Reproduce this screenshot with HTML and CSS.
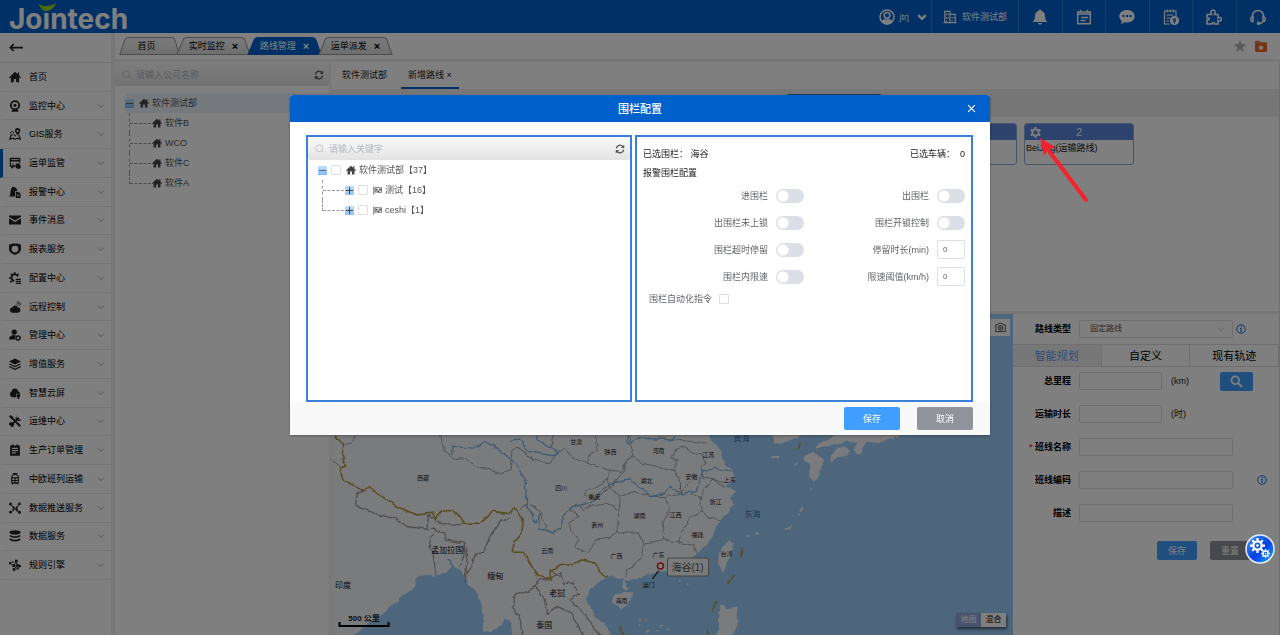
FILE: index.html
```html
<!DOCTYPE html>
<html lang="zh-CN">
<head>
<meta charset="utf-8">
<title>Jointech</title>
<link rel="stylesheet" href="styles.css">
</head>
<body>
<svg class="defs" aria-hidden="true">
  <defs>
    <linearGradient id="g-tab" x1="0" y1="0" x2="0" y2="1"><stop offset="0" stop-color="#f6f6f6"/><stop offset="1" stop-color="#dcdcdc"/></linearGradient>
    <linearGradient id="g-ball" x1="0" y1="0" x2="1" y2="1"><stop offset="0" stop-color="#4a9bf5"/><stop offset=".45" stop-color="#0b50e0"/><stop offset=".55" stop-color="#0a3fe8"/><stop offset="1" stop-color="#18b4ff"/></linearGradient>
    <symbol id="i-home" viewBox="0 0 16 16"><path d="M8 1 0 8.500l1 1L2.500 8.400V15h4v-4.500h3V15h4V8.400L15 9.500l1-1-2.500-2.400V2h-2v2.200z"/></symbol>
    <symbol id="i-tab" viewBox="0 0 74 18" preserveAspectRatio="none"><path d="M1 17.500 7 3Q8 .5 11 .5H64Q67 .5 68 3L73 17.500z" vector-effect="non-scaling-stroke"/></symbol>
    <symbol id="i-down" viewBox="0 0 16 16"><path d="m2 5 6 6 6-6" fill="none" stroke="currentColor" stroke-width="1.500"/></symbol>
    <symbol id="i-search" viewBox="0 0 16 16"><circle cx="7.500" cy="7.500" r="6" fill="none" stroke="currentColor" stroke-width="1.400"/><path d="m12 12 2.500 2.500" stroke="currentColor" stroke-width="1.400"/></symbol>
    <symbol id="i-refresh" viewBox="0 0 16 16"><path d="M2 7a6 6 0 0 1 10.500-3M14 9a6 6 0 0 1-10.500 3" fill="none" stroke="currentColor" stroke-width="2"/><path d="M14.800 1v5.500H9.300zM1.200 15V9.500h5.500z"/></symbol>
    <symbol id="i-info" viewBox="0 0 16 16"><circle cx="8" cy="8" r="6.800" fill="none" stroke="currentColor" stroke-width="1.600"/><circle cx="8.700" cy="4.500" r="1.200"/><path d="M6.500 7.200h2.200L7.700 12h1.500" fill="none" stroke="currentColor" stroke-width="1.600"/></symbol>
    <symbol id="i-flag" viewBox="0 0 16 16"><path d="M1.500 1v14" stroke="currentColor" stroke-width="1.500"/><path d="M4 3c4-2 6 2 11 0v8c-5 2-7-2-11 0z" fill="none" stroke="currentColor" stroke-width="1.300"/><path d="M5 5h3v3H5zM11 5h3v3h-3zM8 8h3v3H8z"/></symbol>
    <symbol id="i-gear" viewBox="0 0 16 16"><circle cx="8" cy="8" r="4.500" fill="none" stroke="currentColor" stroke-width="2.500"/><path d="M6.500 0h3v3h-3zM6.500 13h3v3h-3zM.3 5.300l1.500-2.600 2.600 1.500-1.500 2.600zM11.600 11.800l1.500-2.600 2.600 1.500-1.500 2.600zM.3 10.700l2.600-1.500 1.500 2.600-2.600 1.500zM11.600 4.200l2.600-1.500 1.500 2.600-2.600 1.500z"/></symbol>
    <symbol id="i-cog" viewBox="-10 -10 20 20"><circle r="5.500" fill="none" stroke="#fff" stroke-width="3"/><circle r="1.800" fill="#fff"/><path d="M0-10V-6M0 6v4M-10 0h4M6 0h4M-7-7l3 3M4 4l3 3M-7 7l3-3M4-4l3-3" stroke="#fff" stroke-width="3"/></symbol>
  </defs>
</svg>

<div class="app">
  <header class="topbar">
    <svg class="logo" viewBox="0 0 136 33" role="img" aria-label="Jointech">
      <text x="0" y="29" class="logo-text">Jointech</text>
      <path d="M30 4q8 5 17-1-3 8-10 8-5 0-7-7z" fill="#9bd400"/>
    </svg>
    <div class="top-right">
      <button class="user"><svg viewBox="0 0 16 16"><circle cx="8" cy="8" r="7" fill="none" stroke="currentColor" stroke-width="1.500"/><circle cx="8" cy="6.300" r="2.900" fill="none" stroke="currentColor" stroke-width="1.500"/><path d="M2.500 13C4 9.500 6 10.500 8 10.500s4-1 5.500 2.500Q11 15.500 8 15.500T2.500 13z"/></svg>jtrj<svg class="caret" viewBox="0 0 16 16"><path d="m2 5 6 6 6-6" fill="none" stroke="currentColor" stroke-width="3.500"/></svg></button>
      <button class="company"><svg viewBox="0 0 16 16" fill="none" stroke="currentColor" stroke-width="1.300"><path d="M2 14.500V1.500h6v13M8 5h6v9.500M.5 14.500h15M4 4v2M6 4v2M4 8v2M6 8v2M4 12v2M10.500 8v1.500M12.500 8v1.500M10.500 11v1.500"/></svg>软件测试部</button>
      <div class="tools">
        <button aria-label="通知"><svg viewBox="0 0 16 16"><path d="M8 .5c.9 0 1.300.6 1.300 1.300C12 2.500 13 4.500 13 7c0 3.500 1 4.500 2.500 6H.5C2 11.500 3 10.500 3 7c0-2.500 1-4.500 3.700-5.200C6.700 1.100 7.100.5 8 .5zM6 14h4q-.5 1.700-2 1.700T6 14z"/></svg></button>
        <button aria-label="日程"><svg viewBox="0 0 16 16" fill="none" stroke="currentColor" stroke-width="1.500"><path d="M1.700 3h12.600v11.700H1.700zM1.700 5h12.600M4.500.8v3M11.500.8v3M5 8.500h7M4.500 11.500h5"/></svg></button>
        <button aria-label="消息"><svg viewBox="0 0 16 16"><path fill-rule="evenodd" d="M8 1c4.500 0 7.700 2.700 7.700 6.200S12.500 13.400 8 13.400c-.8 0-1.500 0-2.200-.2L2 15.200l.8-3.200C1.200 10.900.3 9.200.3 7.200.3 3.700 3.500 1 8 1zM3.500 6v2h2V6zM7 6v2h2V6zm3.500 0v2h2V6z"/></svg></button>
        <button aria-label="账单"><svg viewBox="0 0 16 16" fill="none" stroke="currentColor" stroke-width="1.200"><path d="M7 15H1.500V2H13v5M4 .5v3M7.300.5v3M10.500.5v3M3.500 6h7M3.500 9H7M3.500 12H6"/><circle cx="11.500" cy="11.500" r="4" fill="currentColor"/><path d="m10 9.500 1.500 1.500L13 9.500M11.500 11v3.500M10 12h3" stroke="#0061cc"/></svg></button>
        <button aria-label="插件"><svg viewBox="0 0 16 16" fill="none" stroke="currentColor" stroke-width="1.500"><path d="M1 5.500h4.500C4 3 5.200 1 7 1s3 2 1.500 4.500H12V9c2-1.300 3.500-.3 3.500 1.200S14 12.500 12 11.500V15H8.500c.5-2-3-2-2.500 0H1v-4c3 .8 3-3 0-2.200z"/></svg></button>
        <button aria-label="客服"><svg viewBox="0 0 16 16" fill="none" stroke="currentColor" stroke-width="1.500"><path d="M2.500 8V7a5.500 5.500 0 0 1 11 0v1M3 8v4.500H2Q.8 12 .8 10.200T2 8zM13 8v4.500h1q1.200-.5 1.200-2.300T14 8zM12.500 13q-1 1.500-3 1.500"/><circle cx="8.500" cy="14.300" r="1" fill="currentColor"/></svg></button>
      </div>
    </div>
  </header>

  <div class="body">
    <nav class="sidebar">
      <button class="back" aria-label="收起"><svg viewBox="0 0 16 10"><path d="M1 5h15M5.500 1 1.500 5l4 4" fill="none" stroke="currentColor" stroke-width="2"/></svg></button>
      <ul class="menu">
        <li><a href="#"><svg><use href="#i-home"/></svg>首页</a></li>
        <li><a href="#"><svg viewBox="0 0 16 16"><circle cx="8" cy="7" r="5.500" fill="none" stroke="currentColor" stroke-width="2.500"/><circle cx="8" cy="7" r="2"/><path d="M3 15.500 5 12h6l2 3.500z"/></svg>监控中心<svg class="chev"><use href="#i-down"/></svg></a></li>
        <li><a href="#"><svg viewBox="0 0 16 16"><path d="M3 9 1 15l4-1.500 3 1.500 3-1.500 4 1.500-2-6M7 9l2 2" fill="none" stroke="currentColor" stroke-width="1.500"/><path fill-rule="evenodd" d="M11.500 0A3.800 3.800 0 0 1 15 4c0 2-2 3.500-3.500 6C10 7.500 8 6 8 4a3.800 3.800 0 0 1 3.500-4zm0 2.500a1.500 1.500 0 1 0 0 3 1.500 1.500 0 0 0 0-3z"/><path d="M4 4.500q2 0 2 2T4 10Q2 8 2 6.500t2-2z" fill="none" stroke="currentColor"/></svg>GIS服务<svg class="chev"><use href="#i-down"/></svg></a></li>
        <li class="active"><a href="#"><svg viewBox="0 0 16 16"><path fill-rule="evenodd" d="M2 1h12q1 0 1 1v6h-1.500V6h-11v5H9v2H6v2H3v-2H1V2q0-1 1-1zm1 2v1h10V3z"/><path d="M4 8.500h2v1.500H4zM9 8.500h5l1.500 3V15H14a1 1 0 0 1-2.500 0H9z"/></svg>运单监管<svg class="chev"><use href="#i-down"/></svg></a></li>
        <li><a href="#"><svg viewBox="0 0 16 16"><path d="M6 1q5 1 5 6H8v7H0q2-2 2-6 0-6 4-7zM9 8h4l2.500 2.500V16H9z"/><path d="M10.500 11h2M10.500 13h4" stroke="#fff"/></svg>报警中心<svg class="chev"><use href="#i-down"/></svg></a></li>
        <li><a href="#"><svg viewBox="0 0 16 16"><path d="M0 3.500V2h16v1.500L8 8.500zM0 5.500l8 5 8-5V14H0z"/></svg>事件消息<svg class="chev"><use href="#i-down"/></svg></a></li>
        <li><a href="#"><svg viewBox="0 0 16 16"><path fill-rule="evenodd" d="M0 2q3 0 4-1.500h8Q13 2 16 2v6q0 5-8 8-8-3-8-8zm8 1.500a4.500 4.500 0 1 0 0 9 4.500 4.500 0 0 0 0-9z"/></svg>报表服务<svg class="chev"><use href="#i-down"/></svg></a></li>
        <li><a href="#"><svg viewBox="0 0 16 16"><path d="M12 6A4.500 4.500 0 1 0 7 12" fill="none" stroke="currentColor" stroke-width="2.500"/><path d="M6.500 0h2v3h-2zM0 7h3v2H0zM1.500 3 3 1.500 5 4 4 5zM12 1.500 13.500 3 11.500 5 10 4zM2 14.500 1 13l2.500-2L5 12.500zM9 9h7v1.500H9zM9 11.700h7v1.500H9zM9 14.400h7V16H9z"/></svg>配置中心<svg class="chev"><use href="#i-down"/></svg></a></li>
        <li><a href="#"><svg viewBox="0 0 16 16"><path d="M5 15.500a3.500 3.500 0 0 1-.5-7A4 4 0 0 1 12 8.500a3.500 3.500 0 0 1-.5 7z"/><path d="M11 6 9.500 4.500M10 2.500a4 4 0 0 1 4 4M11 .7A5 5 0 0 1 15.500 5" fill="none" stroke="currentColor"/></svg>远程控制<svg class="chev"><use href="#i-down"/></svg></a></li>
        <li><a href="#"><svg viewBox="0 0 16 16"><circle cx="7" cy="4" r="3.500"/><path d="M0 14q0-6 7-6l2 .5Q7 11 8 14z"/><circle cx="12" cy="12" r="2.700" fill="none" stroke="currentColor" stroke-width="2"/></svg>管理中心<svg class="chev"><use href="#i-down"/></svg></a></li>
        <li><a href="#"><svg viewBox="0 0 16 16"><path d="m8 .5 8 4-8 4-8-4z"/><path d="m.5 8 7.500 3.500L15.500 8M.5 11.500 8 15l7.500-3.500" fill="none" stroke="currentColor" stroke-width="1.600"/></svg>增值服务<svg class="chev"><use href="#i-down"/></svg></a></li>
        <li><a href="#"><svg viewBox="0 0 16 16"><path d="M4 13.500a4 4 0 0 1-.5-7.500 4.500 4.500 0 0 1 8.800-.5A3.500 3.500 0 0 1 15 9H9.500v4.500z"/><circle cx="12.500" cy="11.500" r="2.500"/><path d="M11.500 13h2v3h-2z"/></svg>智慧云屏<svg class="chev"><use href="#i-down"/></svg></a></li>
        <li><a href="#"><svg viewBox="0 0 16 16"><path d="m3 13.500 10-10M3.500 3.500l9 9" stroke="currentColor" stroke-width="2.500"/><path d="M0 2 2 0l4 3-2.500 2.500zM10 0v4l2 2h4l-1 2h-3L8.500 4.500zM0 11l3-2 4 3.500-1.500 3L3 16l-1-2-2-1zM10 12l2-2 4 4-2 2z"/></svg>运维中心<svg class="chev"><use href="#i-down"/></svg></a></li>
        <li><a href="#"><svg viewBox="0 0 16 16"><path fill-rule="evenodd" d="M1.500 2H4V.5h2V2h4V.5h2V2h2.500v13.500h-13zM4 5v1.500h8V5zm0 3v1.500h8V8zm0 3v1.500h5V11z"/></svg>生产订单管理<svg class="chev"><use href="#i-down"/></svg></a></li>
        <li><a href="#"><svg viewBox="0 0 16 16" fill="none" stroke="currentColor" stroke-width="1.400"><path d="M3.500 6q0-4 4.500-4t4.500 4v7h-9zM3.500 6.500h9M8 6v7M3.500 10h9M5 .7h6M4 15.500l1-2h6l1 2"/></svg>中欧班列运输<svg class="chev"><use href="#i-down"/></svg></a></li>
        <li><a href="#"><svg viewBox="0 0 16 16"><path d="m2 3 4 4-1 5-3 2M14 2l-3 4-1 5 4 3M6 7l4 4 1-5-6 6" fill="none" stroke="currentColor" stroke-width="1.300"/><circle cx="2" cy="2.500" r="2"/><circle cx="14" cy="2.500" r="1.800"/><circle cx="2" cy="13.500" r="1.800"/><circle cx="14" cy="13.500" r="2"/><circle cx="6" cy="7" r="1.500"/><circle cx="10.500" cy="11" r="1.500"/></svg>数据推送服务<svg class="chev"><use href="#i-down"/></svg></a></li>
        <li><a href="#"><svg viewBox="0 0 16 16"><ellipse cx="8" cy="3.200" rx="7.500" ry="3"/><path d="M1 7.500q7 4 14 0M1 12q7 4.500 14 0" fill="none" stroke="currentColor" stroke-width="2.300"/></svg>数据服务<svg class="chev"><use href="#i-down"/></svg></a></li>
        <li><a href="#"><svg viewBox="0 0 16 16"><path d="M2 6l4 3 3-5 3 4-5 5M6 9h8" fill="none" stroke="currentColor" stroke-width="1.300"/><path d="M0 4h3v3H0zM8 1h3.500v3.500H8zM4.500 7H8v3.500H4.500zM10 6.500h3V10h-3zM13 8h3v3h-3zM5 12h3.500v3.500H5zM10 11h3v3h-3zM4 3h2v2H4z"/></svg>规则引擎<svg class="chev"><use href="#i-down"/></svg></a></li>
      </ul>
    </nav>

    <main class="main">
      <div class="page-tabs">
        <button class="ptab home-tab"><svg class="shape"><use href="#i-tab"/></svg><span>首页</span></button>
        <button class="ptab"><svg class="shape"><use href="#i-tab"/></svg><span>实时监控</span><b>×</b></button>
        <button class="ptab on"><svg class="shape"><use href="#i-tab"/></svg><span>路线管理</span><b>×</b></button>
        <button class="ptab"><svg class="shape"><use href="#i-tab"/></svg><span>运单派发</span><b>×</b></button>
        <div class="fav">
          <svg viewBox="0 0 16 16" fill="#b4b4b4"><path d="m8 0 2.400 5.400 5.600.6-4.200 3.900L13 16l-5-3.200L3 16l1.200-6.100L0 6l5.600-.6z"/></svg>
          <svg viewBox="0 0 16 16"><path d="M1 1h5l2 2h8v3H0V2z" fill="#d98a50"/><rect y="4" width="16" height="12" rx="2" fill="#f2622c"/><path d="m8 6 1.200 2.600 2.800.3-2 1.900.6 2.800L8 12.200l-2.600 1.400.6-2.800-2-1.900 2.800-.3z" fill="#fff"/></svg>
        </div>
      </div>

      <div class="work">
        <section class="org">
          <div class="searchbar"><svg class="mag"><use href="#i-search"/></svg><input aria-label="公司名称" placeholder="请输入公司名称"><button aria-label="刷新"><svg><use href="#i-refresh"/></svg></button></div>
          <div class="org-tree">
            <div class="node root"><i class="exp minus"></i><svg><use href="#i-home"/></svg>软件测试部</div>
            <ul class="kids">
              <li class="node"><i class="lead"></i><svg><use href="#i-home"/></svg>软件B</li>
              <li class="node"><i class="lead"></i><svg><use href="#i-home"/></svg>WCO</li>
              <li class="node"><i class="lead"></i><svg><use href="#i-home"/></svg>软件C</li>
              <li class="node"><i class="lead"></i><svg><use href="#i-home"/></svg>软件A</li>
            </ul>
          </div>
        </section>

        <section class="route">
          <div class="subtabs"><button>软件测试部</button><button class="on">新增路线 <span>×</span></button></div>
          <div class="lane-tools"><div class="lane-box"></div></div>
          <div class="cards">
            <article class="card"><h3></h3><p></p></article>
            <article class="card"><h3><svg><use href="#i-gear"/></svg>2</h3><p>BeiJing(运输路线)</p></article>
          </div>
          <div class="lower">
            <div class="map">
              <svg class="map-art" viewBox="331 314 681 321" preserveAspectRatio="xMinYMax slice">
                <defs><filter id="rough" x="0" y="0" width="1" height="1" color-interpolation-filters="sRGB"><feTurbulence type="fractalNoise" baseFrequency=".12" numOctaves="2" seed="4"/><feDisplacementMap in="SourceGraphic" scale="5" xChannelSelector="R" yChannelSelector="G"/></filter></defs>
                <rect x="331" y="314" width="681" height="321" fill="#9acdf8"/>
                <g filter="url(#rough)"><g transform="translate(320 400) scale(.333333)">
                  <g fill="#f5f6fa">
                    <path d="M20 60H1130L1165 105 1170 125 1195 140 1205 165 1210 195 1235 210 1245 240 1215 265 1250 275 1230 290 1238 310 1225 335 1200 360 1185 385 1175 415 1155 440 1125 465 1070 500 1030 515 980 525 940 540 912 545 928 568 915 572 905 560 908 540 880 530 862 530 830 550 805 575 800 600 820 640 860 680 880 730H580L570 660 555 652 545 675 510 697 488 690 490 640 480 600 470 575 445 555 425 510 400 500 380 515 345 530 320 522 290 535 285 560 240 595 200 630 150 665 105 705 90 730H20z"/>
                    <path d="M880 590 905 575 940 578 930 605 905 627 880 610z"/>
                    <path d="M1225 425 1240 430 1235 455 1215 500 1207 520 1192 490 1195 460 1210 435z"/>
                    <path d="M1200 615 1220 625 1248 620 1245 650 1253 665 1230 720H1175L1195 690V655z"/>
                    <path d="M1355 60V105L1362 135 1390 130 1410 120 1435 118 1440 60zM1355 170l18-5 2 7-18 4zM1450 180 1460 160 1480 153 1490 165 1510 180 1500 200 1490 240 1475 245 1465 225 1470 195zM1485 150 1495 135 1550 100H1745L1725 110 1705 118 1670 130 1640 125 1615 165 1598 150 1610 130 1580 125 1520 140zM1530 165 1550 145 1570 138 1585 150 1575 170 1550 172 1535 188z"/>
                    <path d="M1422 193l8-7M1470 264l6 4M1435 333l12-8M1396 392l15-14M1430 347l4-5M1278 408h6M1308 402h6M1075 545h5M1096 553h5M953 658h6M975 664h6M955 676h6M980 692h6M1018 680h6M1040 686h6M1008 693h6M975 663h5" fill="none" stroke="#f5f6fa" stroke-width="5"/>
                  </g>
                  <g fill="none" stroke="#aaaaae" stroke-width="3" stroke-linejoin="round">
                    <path d="M75 134 95 130 110 105M360 100 370 150 400 175 440 180 470 200 510 210 540 222 570 210 575 150 590 142 610 155 640 180 690 190 700 165 730 145 760 180 800 190 860 210 900 215 920 180 905 220 880 250 850 280 825 300 790 290 795 270 820 265 860 240 870 210M690 140 700 105M800 190 810 165 830 155 825 105M920 180 940 170 930 130 925 105M940 170 960 190 1010 200 1060 215 1080 240 1080 280 1110 245M1080 280 1030 290 990 290 940 275 900 290 870 265 860 240M900 290 895 340 890 395 930 400 955 395 970 430 960 480 925 510 910 535M770 310 790 330 820 315 860 310 890 330M770 310 750 330 775 350 745 370 755 400 775 420 765 440 800 460 830 420 870 415 890 395M1030 290 1050 330 1025 370 1030 420 970 430M1030 420 1080 430 1115 440 1130 460M1075 435 1080 400 1110 350 1145 335 1140 300 1150 270 1180 240 1210 265M1145 335 1165 355 1200 360M1110 280 1145 300M1080 240 1060 215 1070 180 1055 175 1065 150 1090 140 1115 160 1140 165 1160 190 1140 205 1150 235 1210 245M1010 110 1060 120 1160 130M630 310 660 340 680 380 665 395M600 335 615 310 640 350"/>
                    <path d="M130 270 110 280 103 315 170 345 220 355 260 380 320 388 325 345 340 355M345 370 430 375M320 388 340 385 370 400 375 420 435 430 430 470 420 500M340 400 325 410 330 440 340 470 348 528M435 430 440 480 435 550M440 520 455 500 465 460 490 460 515 400 540 365 570 355M645 560 620 575 585 585 575 620 600 660 605 705M645 560 660 540 690 540 720 515 730 550 760 550 775 580 750 600 790 640 840 705M645 560 670 590 680 645 710 620 750 640 790 705M690 510 720 530M33 180 60 200" stroke="#a49d98" stroke-width="4"/>
                  </g>
                  <path d="M45 105 72 140 65 165 80 200 58 205 70 240 130 272 150 265 200 300 240 325 290 345 340 340 345 362 365 332 410 340 430 370 475 370 520 335 570 342 580 322 608 355 605 400 580 430 580 460 610 460 650 525 690 540 690 510 720 495 760 490 785 480 825 490 835 515 862 530" fill="none" stroke="#b49a48" stroke-width="5"/>
                  <g fill="none" stroke="#82b9e6" stroke-width="4">
                    <path d="M398 165V140L460 145 495 125 550 160 600 205 615 250 620 320 645 370 657 345 655 390 700 398 725 385 725 350 760 320 810 310 870 250 930 240 990 290 1030 280 1050 260 1085 285 1130 270 1145 220 1180 205 1240 215M570 122 600 118 620 155 700 168 710 155 650 120V105M920 105V130L960 115 1050 120 1060 108M380 475 400 505"/>
                  </g>
                  <path d="M1265 440l-4 32M1241 525l-22 28M1189 603l-18 30M1162 687v18M895 682l16 24M1438 128l-4 18" fill="none" stroke="#b49a48" stroke-width="5"/>
                </g></g>
                <g class="lbl">
                  <text x="576" y="444">甘肃</text><text x="610" y="454">陕西</text><text x="658" y="453">河南</text><text x="708" y="457">江苏</text><text x="423" y="480">西藏</text><text x="561" y="490">四川</text><text x="594" y="499">重庆</text><text x="646" y="483">湖北</text><text x="691" y="479">安徽</text><text x="729" y="482">上海</text><text x="639" y="518">湖南</text><text x="675" y="517">江西</text><text x="715" y="504">浙江</text><text x="597" y="527">贵州</text><text x="697" y="537">福建</text><text x="547" y="553">云南</text><text x="616" y="558">广西</text><text x="658" y="557">广东</text><text x="726" y="556">台湾</text><text x="621" y="603">海南</text><text x="648" y="587">澳门</text>
                </g>
                <g class="lbl sea"><text x="741" y="441">黄海</text><text x="752" y="517">东海</text></g>
                <g class="lbl nation"><text x="447" y="553">孟加拉国</text><text x="495" y="579">缅甸</text><text x="343" y="588">印度</text><text x="557" y="596">老挝</text><text x="544" y="628">泰国</text></g>
                <path d="m652 579 6-8" stroke="#333" stroke-width="1.500"/>
                <circle cx="660" cy="566" r="3" fill="#fff" stroke="#e02020" stroke-width="1.500"/>
                <rect x="667" y="558" width="41" height="18" rx="2" fill="#f5f5f5" stroke="#888"/>
                <text class="pin" x="687" y="571">海谷(1)</text>
                <path d="M339.500 622v4h49v-4" fill="none" stroke="#000" stroke-width="2"/>
                <text class="scale" x="364" y="621">500 公里</text>
              </svg>
              <button class="shot" aria-label="截图"><svg viewBox="0 0 16 16" fill="none" stroke="currentColor" stroke-width="1.300"><path d="M1 4h3l1.500-2h5L12 4h3v10H1z"/><circle cx="8" cy="8.500" r="3.500"/><circle cx="8" cy="8.500" r="1.300"/></svg></button>
              <div class="maptype"><button class="on">地图</button><button>混合</button></div>
            </div>

            <form class="plan">
              <div class="row type-row"><label for="rt">路线类型</label><span class="sel"><select id="rt"><option>固定路线</option></select><svg><use href="#i-down"/></svg></span><svg class="info"><use href="#i-info"/></svg></div>
              <div class="modes"><button type="button" class="on">智能规划</button><button type="button">自定义</button><button type="button">现有轨迹</button></div>
              <div class="fields">
                <div class="row"><label for="f1">总里程</label><input id="f1" class="short"><span class="unit">(km)</span><button type="button" class="find" aria-label="搜索"><svg viewBox="0 0 16 16" fill="none" stroke="currentColor" stroke-width="2.200"><circle cx="6.500" cy="6.500" r="4.700"/><path d="m10 10 5 5"/></svg></button></div>
                <div class="row"><label for="f2">运输时长</label><input id="f2" class="short"><span class="unit">(时)</span></div>
                <div class="row"><label for="f3"><em>*</em> 班线名称</label><input id="f3"></div>
                <div class="row"><label for="f4">班线编码</label><input id="f4"><svg class="info far"><use href="#i-info"/></svg></div>
                <div class="row"><label for="f5">描述</label><input id="f5"></div>
              </div>
              <div class="plan-actions"><button type="button" class="primary">保存</button><button type="button" class="plain">重置</button></div>
            </form>
          </div>
        </section>
      </div>
    </main>
  </div>
</div>

<div class="mask">
  <div class="dialog" role="dialog" aria-labelledby="dt">
    <div class="dialog-head"><h2 id="dt">围栏配置</h2><button aria-label="关闭"><svg viewBox="0 0 16 16"><path d="m2 2 12 12M14 2 2 14" stroke="currentColor" stroke-width="2"/></svg></button></div>
    <div class="dialog-body">
      <section class="pane fences">
        <div class="searchbar"><svg class="mag"><use href="#i-search"/></svg><input aria-label="关键字" placeholder="请输入关键字"><button aria-label="刷新"><svg><use href="#i-refresh"/></svg></button></div>
        <div class="fence-tree">
          <div class="node"><i class="exp minus"></i><input type="checkbox" id="n0"><label for="n0"><svg><use href="#i-home"/></svg>软件测试部【37】</label></div>
          <ul class="kids">
            <li class="node"><i class="lead"></i><i class="exp plus"></i><input type="checkbox" id="n1"><label for="n1"><svg><use href="#i-flag"/></svg>测试【16】</label></li>
            <li class="node"><i class="lead"></i><i class="exp plus"></i><input type="checkbox" id="n2"><label for="n2"><svg><use href="#i-flag"/></svg>ceshi【1】</label></li>
          </ul>
        </div>
      </section>
      <section class="pane config">
        <div class="chosen"><span>已选围栏： 海谷</span><span>已选车辆：&nbsp; 0</span></div>
        <h3>报警围栏配置</h3>
        <div class="opts">
          <div class="opt"><label for="s1">进围栏</label><input type="checkbox" role="switch" class="switch" id="s1"></div>
          <div class="opt"><label for="s2">出围栏</label><input type="checkbox" role="switch" class="switch" id="s2"></div>
          <div class="opt"><label for="s3">出围栏未上锁</label><input type="checkbox" role="switch" class="switch" id="s3"></div>
          <div class="opt"><label for="s4">围栏开锁控制</label><input type="checkbox" role="switch" class="switch" id="s4"></div>
          <div class="opt"><label for="s5">围栏超时停留</label><input type="checkbox" role="switch" class="switch" id="s5"></div>
          <div class="opt"><label for="s6">停留时长(min)</label><input class="num" id="s6" value="0"></div>
          <div class="opt"><label for="s7">围栏内限速</label><input type="checkbox" role="switch" class="switch" id="s7"></div>
          <div class="opt"><label for="s8">限速阈值(km/h)</label><input class="num" id="s8" value="0"></div>
        </div>
        <div class="auto"><label for="au">围栏自动化指令</label><input type="checkbox" id="au"></div>
      </section>
    </div>
    <div class="dialog-foot"><button class="primary">保存</button><button class="plain">取消</button></div>
  </div>
</div>

<svg class="pointer" viewBox="0 0 50 65" aria-hidden="true"><path d="M47 62 10 13" stroke="#f5222d" stroke-width="4" stroke-linecap="round"/><path d="m1 0 15 9-7 3-4 6z" fill="#f5222d"/></svg>
<button class="float" aria-label="设置"><svg viewBox="0 0 30 30"><circle cx="15" cy="15" r="14" fill="url(#g-ball)" stroke="#e6eefc" stroke-width="1.500"/><use href="#i-cog" x="5" y="4" width="15" height="15"/><use href="#i-cog" x="16" y="15" width="9" height="9"/></svg></button>
</body>
</html>
```
FILE: styles.css
```css
* { box-sizing: border-box; }
body {
  margin: 0;
  font: 9px/12px "Liberation Sans", "Noto Sans CJK SC", sans-serif;
  color: #222;
  background: #fff;
}
button, input, select { font: inherit; color: inherit; margin: 0; padding: 0; border: 0; background: none; }
ul { list-style: none; margin: 0; padding: 0; }
h2, h3, p { margin: 0; font-weight: normal; }
a { color: inherit; text-decoration: none; }
svg { flex: none; display: block; }
svg:not([fill]) { fill: currentColor; }
.defs { position: absolute; width: 0; height: 0; }

.app { display: flex; flex-direction: column; height: 100vh; min-height: 635px; overflow: hidden; }

.topbar { display: flex; justify-content: space-between; flex: none; height: 33px; background: #0061cc; color: #fff; }
.logo { width: 136px; height: 33px; margin-left: 9px; }
.logo-text { font: bold 28px Inter, sans-serif; fill: #fff; }
.top-right { display: flex; }
.top-right button { display: flex; align-items: center; justify-content: center; height: 33px; border-right: 1px solid #2a7edb; }
.top-right svg { width: 16px; height: 16px; }
.top-right .user { gap: 5px; padding: 0 4px; color: #fff; }
.top-right .caret { width: 10px; height: 10px; margin-left: 3px; }
.top-right .company { width: 87px; gap: 5px; }
.top-right .company svg { width: 14px; height: 14px; }
.tools { display: grid; grid-template-columns: repeat(6, 1fr); width: 261px; }
.tools button:last-child { border-right: 0; }

.body { display: flex; flex: 1; min-height: 0; }
.sidebar { display: flex; flex-direction: column; flex: none; width: 115px; padding-bottom: 55px; border-right: 4px solid #efefef; }
.back { display: flex; align-items: center; flex: none; height: 30px; padding-left: 9px; border-bottom: 1px solid #e4e4e4; }
.back svg { width: 14px; height: 9px; }
.menu { display: flex; flex-direction: column; flex: 1; }
.menu li { flex: 1; display: flex; border-bottom: 1px solid #e8e8e8; border-left: 3px solid transparent; }
.menu li.active { border-left-color: #0061cc; }
.menu a { flex: 1; display: flex; align-items: center; gap: 8px; padding: 0 6px; color: #000; }
.menu svg { width: 12px; height: 12px; color: #222; }
.menu .chev { width: 8px; height: 8px; margin-left: auto; color: #888; }

.main { display: flex; flex-direction: column; flex: 1; min-width: 0; }
.page-tabs { display: flex; align-items: center; flex: none; height: 29px; padding: 0 13px 0 4px; border-bottom: 3px solid #efefef; }
.ptab { position: relative; display: flex; align-items: center; justify-content: center; gap: 7px; width: 75px; height: 18px; margin-right: -4px; color: #000; }
.ptab span { position: relative; }
.ptab b { position: relative; font-size: 11px; }
.home-tab { width: 61px; padding-right: 6px; }
.shape { position: absolute; inset: 0; width: 100%; height: 100%; stroke: #999; }
.ptab svg.shape { fill: url(#g-tab); }
.ptab.on { color: #fff; }
.ptab.on svg.shape { fill: #0061cc; stroke: #0061cc; }
.fav { display: flex; gap: 9px; margin-left: auto; }
.fav svg { width: 12px; height: 12px; }

.work { display: flex; flex: 1; min-height: 0; padding-top: 1px; }
.org { flex: none; width: 214px; }
.searchbar { display: flex; align-items: center; height: 23px; padding: 0 5px 0 7px; gap: 5px; background: linear-gradient(#fafafa, #e3e3e3); border-radius: 2px; }
.searchbar .mag { width: 9px; height: 9px; color: #bbb; }
.searchbar input { flex: 1; min-width: 0; height: 18px; outline: 0; }
.searchbar input::placeholder { color: #b4b8c0; }
.searchbar button svg { width: 10px; height: 10px; color: #555; }
.org-tree { padding: 7px 0 0 10px; color: #555; }
.node { display: flex; align-items: center; height: 20px; line-height: 20px; }
.node svg { width: 10px; height: 10px; color: #444; }
.org-tree .node svg { margin-right: 3px; }
.root { background: #eaf2fc; }
.exp { flex: none; width: 9px; height: 9px; background: linear-gradient(#666, #666) center/7px 1px no-repeat, linear-gradient(#bfe0ff, #7fbcf8); }
.exp.plus { background: linear-gradient(#444, #444) center/7px 1px no-repeat, linear-gradient(#444, #444) center/1px 7px no-repeat, linear-gradient(#bfe0ff, #8fc4fa); }
.root .exp { margin-right: 5px; }
.kids { margin-left: 4px; }
.lead { position: relative; align-self: stretch; width: 22px; margin-right: 1px; border-left: 1px dashed #999; }
.lead::after { content: ""; position: absolute; left: 0; right: 0; top: 10px; border-top: 1px dashed #999; }
.kids .node:last-child .lead { align-self: flex-start; height: 11px; }

.route { display: flex; flex-direction: column; flex: 1; min-width: 0; border-left: 2px solid #eee; border-right: 1px solid #ddd; }
.subtabs { display: flex; gap: 8px; flex: none; height: 26px; padding-left: 11px; }
.subtabs button { height: 26px; padding: 0 6px 0 0; border-bottom: 2px solid transparent; }
.subtabs .on { border-bottom-color: #0061cc; padding: 0 7px; }
.lane-tools { flex: none; height: 28px; padding: 5px 0 0 454px; background: #ececec; }
.lane-box { width: 98px; height: 20px; border: 1px solid #4a6ea8; border-radius: 4px; background: #fff; }
.cards { display: flex; justify-content: flex-end; gap: 7px; flex: none; height: 194px; padding: 6px 145px 0 0; }
.card { width: 110px; height: 42px; border: 1px solid #8ea8dc; border-radius: 3px; overflow: hidden; }
.card h3 { position: relative; height: 16px; font-size: 11px; line-height: 16px; text-align: center; color: #fff; background: #5a84d8; }
.card h3 svg { position: absolute; left: 5px; top: 3px; width: 11px; height: 11px; }
.card p { padding: 2px 1px; }

.lower { display: flex; flex: 1; min-height: 0; border-top: 3px solid #ececec; }
.map { position: relative; flex: 1; min-width: 0; overflow: hidden; }
.map-art { width: 100%; height: 100%; }
.map-art text { text-anchor: middle; }
.lbl { font-size: 6px; fill: #222; }
.lbl.sea { font-size: 8px; fill: #3f6fa8; }
.lbl.nation { font-size: 8px; fill: #111; }
.pin { font-size: 10px; fill: #555; }
.scale { font-size: 8px; font-weight: bold; }
.shot { position: absolute; right: 3px; top: 5px; display: grid; place-items: center; width: 20px; height: 17px; background: #fff; color: #444; }
.shot svg { width: 11px; height: 11px; }
.maptype { position: absolute; right: 7px; bottom: 8px; display: flex; box-shadow: 1px 2px 3px #456; }
.maptype button { width: 25px; height: 14px; font-size: 8px; line-height: 14px; background: #fff; color: #000; }
.maptype .on { background: #8ea8e0; color: #fff; }

.plan { flex: none; width: 266px; color: #222; }
.row { display: flex; align-items: center; height: 18px; }
.row label { width: 58px; margin-right: 8px; text-align: right; font-weight: bold; color: #000; white-space: nowrap; }
.row em { color: #f44; font-style: normal; }
.row input, .sel { width: 154px; height: 18px; border: 1px solid #dcdcdc; border-radius: 2px; }
.row .short { width: 83px; }
.type-row { height: 30px; }
.sel { display: flex; align-items: center; }
.sel select { flex: 1; appearance: none; height: 16px; padding-left: 10px; font-size: 8px; color: #555; }
.sel svg { width: 8px; height: 8px; margin: 0 7px 0 -15px; color: #aaa; }
.info { width: 10px; height: 10px; margin-left: 3px; color: #1a6fd4; }
.info.far { margin-left: 24px; }
.unit { width: 49px; margin-left: 9px; }
.find { display: grid; place-items: center; width: 33px; height: 19px; border-radius: 2px; background: #409eff; color: #fff; }
.find svg { width: 13px; height: 13px; }
.modes { display: grid; grid-template-columns: repeat(3, 1fr); height: 23px; border: solid #ddd; border-width: 1px 0; }
.modes button { font-size: 11px; border-right: 1px solid #ddd; color: #000; }
.modes .on { background: #eee; color: #5e9cf0; }
.fields { display: flex; flex-direction: column; gap: 15px; padding-top: 5px; }
.plan-actions { display: flex; gap: 13px; padding: 19px 0 0 144px; }
.primary, .plain { height: 19px; width: 40px; border-radius: 2px; color: #fff; }
.primary { background: #409eff; }
.plain { background: #909399; }

.mask { position: fixed; inset: 0; display: flex; justify-content: center; align-items: flex-start; padding-top: 95px; background: rgba(0, 0, 0, .5); }
.dialog { width: 700px; max-width: 96vw; border-radius: 3px 3px 0 0; overflow: hidden; background: #fff; box-shadow: 0 1px 3px rgba(0, 0, 0, .3); }
.dialog-head { position: relative; display: flex; align-items: center; justify-content: center; height: 27px; background: #0061cc; color: #fff; }
.dialog-head h2 { font-size: 11px; font-weight: 500; }
.dialog-head button { position: absolute; right: 14px; top: 9px; }
.dialog-head svg { width: 9px; height: 9px; }
.dialog-body { display: grid; grid-template-columns: 326fr 338fr; gap: 3px; padding: 13px 17px 0 16px; }
.pane { min-width: 0; height: 267px; border: 2px solid #3a80d8; }
.config { padding: 11px 6px 0; color: #222; }
.fence-tree { padding-left: 10px; color: #555; }
.fence-tree label { display: flex; align-items: center; }
.fence-tree .node svg { margin: 0 3px 0 5px; }
.fence-tree .kids svg { width: 9px; height: 9px; }
.pane input[type="checkbox"]:not(.switch) { appearance: none; width: 10px; height: 10px; border: 1px solid #dcdfe6; border-radius: 1px; background: #fff; }
.fence-tree input[type="checkbox"]:not(.switch) { margin: 0 0 0 4px; }
.chosen { display: flex; justify-content: space-between; }
.config h3 { margin: 7px 0 3px; font-size: 9px; line-height: 12px; }
.opts { display: grid; grid-template-columns: 1fr 1fr; color: #606266; }
.opt { display: flex; align-items: center; justify-content: flex-end; gap: 8px; height: 27px; }
.switch { appearance: none; width: 28px; height: 14px; border-radius: 7px; background: radial-gradient(circle at 7px 7px, #fff 5px, transparent 6px), #dcdfe6; }
.num { width: 28px; height: 19px; padding-left: 5px; font-size: 8px; border: 1px solid #dcdfe6; border-radius: 2px; }
.auto { display: flex; align-items: center; gap: 7px; padding: 3px 0 0 6px; color: #606266; }
.dialog-foot { display: flex; justify-content: flex-end; gap: 17px; padding: 5px 17px; background: #f9f9f9; }
.dialog-foot button { width: 56px; height: 23px; }

.pointer { position: fixed; left: 1039px; top: 138px; width: 50px; height: 65px; }
.float { position: fixed; right: 5px; bottom: 71px; }
.float svg { width: 30px; height: 30px; }
```
